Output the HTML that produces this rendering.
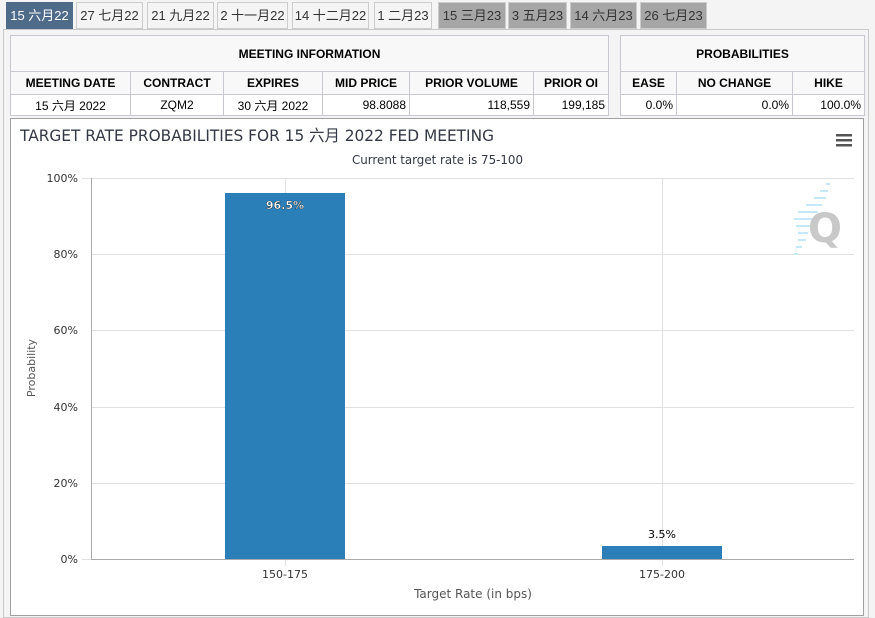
<!DOCTYPE html>
<html><head><meta charset="utf-8"><style>
*{margin:0;padding:0;box-sizing:border-box}
body{width:875px;height:618px;background:#f4f4f4;font-family:"Liberation Sans","Noto Sans CJK SC",sans-serif;position:relative;overflow:hidden}
.tab{position:absolute;top:2px;height:27px;border:1px solid #ccc;background:#f4f4f4;font-size:13px;color:#333;line-height:25px;text-align:center}
.tab.a{background:#4e6b8a;color:#fff;border-color:#4e6b8a}
.tab.g{background:#a6a6a6;color:#333;border-color:#ccc}
.panel{position:absolute;left:3px;top:29px;width:866px;height:589px;border:1px solid #c8c8c8;background:#f4f4f4}
table{position:absolute;border-collapse:collapse;background:#fff;font-size:12px;color:#000}
td{border:1px solid #c8c8d0;padding:0 3px}
.h td{font-weight:bold;text-align:center;background:#f8f8f8}
.r td{text-align:right}
.chart{position:absolute;left:10px;top:118px;width:854px;height:498px;border:1px solid #a0a0a0;background:#fff}
</style></head><body>
<div class="panel"></div>
<div class="tab a" style="left:6px;width:67px">15 六月22</div>
<div class="tab" style="left:76px;width:67px">27 七月22</div>
<div class="tab" style="left:147px;width:67px">21 九月22</div>
<div class="tab" style="left:217px;width:71px">2 十一月22</div>
<div class="tab" style="left:292px;width:77px">14 十二月22</div>
<div class="tab" style="left:374px;width:58px">1 二月23</div>
<div class="tab g" style="left:438px;width:68px">15 三月23</div>
<div class="tab g" style="left:508px;width:59px">3 五月23</div>
<div class="tab g" style="left:570px;width:67px">14 六月23</div>
<div class="tab g" style="left:640px;width:67px">26 七月23</div>

<table style="left:10px;top:35px;width:599px">
<tr class="h" style="height:36px"><td colspan="6">MEETING INFORMATION</td></tr>
<tr class="h" style="height:23px"><td style="width:120px">MEETING DATE</td><td style="width:93px">CONTRACT</td><td style="width:99px">EXPIRES</td><td style="width:87px">MID PRICE</td><td style="width:124px">PRIOR VOLUME</td><td>PRIOR OI</td></tr>
<tr class="r" style="height:21px"><td style="text-align:center">15 六月 2022</td><td style="text-align:center">ZQM2</td><td style="text-align:center">30 六月 2022</td><td>98.8088</td><td>118,559</td><td>199,185</td></tr>
</table>
<table style="left:620px;top:35px;width:245px">
<tr class="h" style="height:36px"><td colspan="3">PROBABILITIES</td></tr>
<tr class="h" style="height:23px"><td style="width:56px">EASE</td><td style="width:116px">NO CHANGE</td><td>HIKE</td></tr>
<tr class="r" style="height:21px"><td>0.0%</td><td>0.0%</td><td>100.0%</td></tr>
</table>

<div class="chart"></div>
<svg style="position:absolute;left:0;top:0" width="875" height="618" font-family="DejaVu Sans,Liberation Sans,Noto Sans CJK SC,sans-serif">
<text x="20" y="141" font-size="16" fill="#333844" textLength="474" lengthAdjust="spacingAndGlyphs">TARGET RATE PROBABILITIES FOR 15 六月 2022 FED MEETING</text>
<text x="352" y="164" font-size="12" fill="#333844" textLength="171" lengthAdjust="spacingAndGlyphs">Current target rate is 75-100</text>
<g fill="#555"><rect x="836" y="134" width="16" height="2.5"/><rect x="836" y="139" width="16" height="2.5"/><rect x="836" y="144" width="16" height="2.5"/></g>
<g stroke="#e0e0e0" stroke-width="1">
<line x1="91" y1="178.5" x2="854" y2="178.5"/><line x1="91" y1="254.5" x2="854" y2="254.5"/><line x1="91" y1="330.5" x2="854" y2="330.5"/><line x1="91" y1="407.5" x2="854" y2="407.5"/><line x1="91" y1="483.5" x2="854" y2="483.5"/>
<line x1="285.5" y1="178" x2="285.5" y2="559"/><line x1="662.5" y1="178" x2="662.5" y2="559"/>
<line x1="82" y1="178.5" x2="91" y2="178.5"/><line x1="82" y1="559.5" x2="91" y2="559.5"/>
<line x1="285.5" y1="559" x2="285.5" y2="566"/><line x1="662.5" y1="559" x2="662.5" y2="566"/>
</g>
<line x1="91.5" y1="178" x2="91.5" y2="559" stroke="#aaa"/>
<line x1="91" y1="559.5" x2="854" y2="559.5" stroke="#aaa"/>
<g font-size="11" fill="#333" text-anchor="end">
<text x="78" y="182">100%</text><text x="78" y="258">80%</text><text x="78" y="334">60%</text><text x="78" y="411">40%</text><text x="78" y="487">20%</text><text x="78" y="563">0%</text>
</g>
<text transform="translate(35 368) rotate(-90)" font-size="11" fill="#555" text-anchor="middle">Probability</text>
<rect x="225" y="193" width="120" height="366" fill="#2a7fb8"/>
<rect x="602" y="546" width="120" height="13" fill="#2a7fb8"/>
<text x="285" y="209" font-size="11" fill="#fff" text-anchor="middle" font-weight="bold" stroke="#000" stroke-width="0.3">96.5%</text>
<text x="662" y="538" font-size="11" fill="#000" text-anchor="middle">3.5%</text>
<g font-size="11" fill="#333" text-anchor="middle"><text x="285" y="578">150-175</text><text x="662" y="578">175-200</text></g>
<text x="473" y="598" font-size="12" fill="#555" text-anchor="middle">Target Rate (in bps)</text>
<g stroke="#c4e8f8" stroke-width="2"><line x1="826" y1="184" x2="830" y2="184"/><line x1="820" y1="191" x2="828" y2="191"/><line x1="814" y1="198" x2="826" y2="198"/><line x1="806" y1="205" x2="822" y2="205"/><line x1="798" y1="212" x2="818" y2="212"/><line x1="794" y1="219" x2="814" y2="219"/><line x1="796" y1="226" x2="812" y2="226"/><line x1="798" y1="233" x2="808" y2="233"/><line x1="798" y1="240" x2="806" y2="240"/><line x1="796" y1="247" x2="802" y2="247"/><line x1="794" y1="254" x2="798" y2="254"/></g>
<text x="808" y="242" font-size="40" font-weight="bold" fill="#c8c8c8">Q</text>
</svg>
</body></html>
